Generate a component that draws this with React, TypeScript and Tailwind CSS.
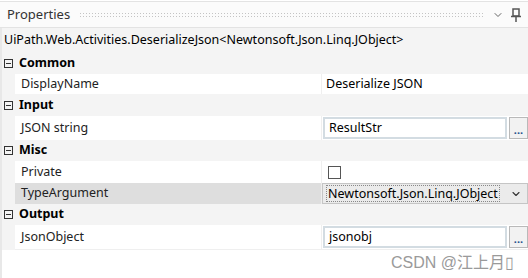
import { ChevronDown } from "lucide-react";

const font = { fontFamily: '"Noto Sans", "Liberation Sans", sans-serif' };

function Category({ label, h }: { label: string; h: string }) {
  return (
    <div className={`flex items-center ${h} bg-[#f4f4f4]`}>
      <div className="ml-[2px] w-[9px] h-[9px] border border-[#333] flex items-center justify-center">
        <div className="w-[5px] h-px bg-[#333]" />
      </div>
      <span className="ml-[6px] font-bold text-[12.5px] text-black">{label}</span>
    </div>
  );
}

function Row({ name, h, selected, children }: { name: string; h: string; selected?: boolean; children: React.ReactNode }) {
  return (
    <div className={`flex ${h} bg-[#f4f4f4]`}>
      <div className={`w-[306px] ml-[13px] flex items-center pl-[6px] text-[12.5px] text-[#222] ${selected ? "bg-[#dedede]" : "bg-white"}`}>
        {name}
      </div>
      <div className="w-px bg-[#efefef]" />
      <div className="flex-1 flex items-center bg-white">{children}</div>
    </div>
  );
}

function TextBox({ value }: { value: string }) {
  return (
    <div className="flex items-center w-full h-full py-px">
      <div className="flex-1 h-[22px] ml-px border-2 border-[#d3dce2] bg-white flex items-center pl-[4px] text-[12.5px] text-black">
        {value}
      </div>
      <div className="w-[19px] h-[22px] ml-[2px] border border-[#b9b9b9] bg-[#f2f2f2] flex items-end justify-center pb-[3px] text-[11px] leading-none text-[#1e4f8c] font-bold">
        ...
      </div>
    </div>
  );
}

export default function App() {
  return (
    <div className="w-[528px] h-[278px] bg-white overflow-hidden relative" style={font}>
      {/* title bar */}
      <div className="h-[27px] mt-px border-t border-b border-[#e3e3e3] bg-[#fbfbfb] flex items-center">
        <span className="ml-[7px] text-[13px] text-[#333]">Properties</span>
        <div className="flex-1 mx-[9px] h-[5px] bg-[radial-gradient(#c4c4c4_0.5px,transparent_0.7px)] bg-[length:3px_3px]" />
        <ChevronDown size={12} strokeWidth={2} className="text-[#666] mr-[6px]" />
        <svg width="12" height="14" viewBox="0 0 12 14" className="mr-[6px]">
          <rect x="3" y="1" width="6" height="7" fill="none" stroke="#555" strokeWidth="1.5" />
          <line x1="1" y1="8.5" x2="11" y2="8.5" stroke="#555" strokeWidth="1.5" />
          <line x1="6" y1="9" x2="6" y2="14" stroke="#555" strokeWidth="1.5" />
        </svg>
      </div>
      {/* body */}
      <div className="bg-[#f4f4f4] border-l-[2px] border-[#e8e8e8]">
        <div className="h-[25px] flex items-center pl-[2px] text-[12.5px] text-black">
          UiPath.Web.Activities.DeserializeJson&lt;Newtonsoft.Json.Linq.JObject&gt;
        </div>
        <Category label="Common" h="h-[21px]" />
        <Row name="DisplayName" h="h-[20px]">
          <span className="pl-[4px] text-[12.5px] text-black">Deserialize JSON</span>
        </Row>
        <Category label="Input" h="h-[22px]" />
        <Row name="JSON string" h="h-[24px]">
          <TextBox value="ResultStr" />
        </Row>
        <Category label="Misc" h="h-[21px]" />
        <Row name="Private" h="h-[22px]">
          <div className="ml-[6px] w-[13px] h-[13px] border border-[#555] bg-white" />
        </Row>
        <Row name="TypeArgument" h="h-[21px]" selected>
          <div className="w-full h-full border border-[#c5c5c5] bg-[#ebebeb] flex items-center">
            <span className="ml-[3px] px-px border border-dotted border-[#888] text-[12.5px] leading-[15px] text-black">
              Newtonsoft.Json.Linq.JObject
            </span>
            <ChevronDown size={12} strokeWidth={2.2} className="ml-auto mr-[5px] text-[#333]" />
          </div>
        </Row>
        <Category label="Output" h="h-[21px]" />
        <Row name="JsonObject" h="h-[24px]">
          <TextBox value="jsonobj" />
        </Row>
        <div className="h-px bg-[#efefef] ml-[13px]" />
      </div>
      <div className="bg-white h-[40px] border-l-[2px] border-[#e8e8e8] flex justify-end pt-[1px] pr-[14px]">
        <span
          className="text-[16px] text-[#9a9a9a]"
          style={{ fontFamily: '"Liberation Sans", "Noto Sans CJK SC", sans-serif' }}
        >
          CSDN @江上月▯
        </span>
      </div>
    </div>
  );
}
